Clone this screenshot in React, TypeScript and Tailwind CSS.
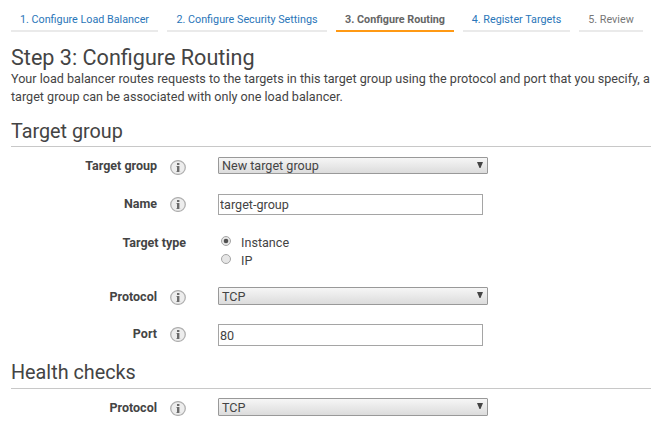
import type { ReactNode } from "react";

const steps = [
  { label: "1. Configure Load Balancer", width: "w-[147px]", style: "border-[#eaeaea] text-[#2a76b9]" },
  { label: "2. Configure Security Settings", width: "w-[160px]", style: "border-[#eaeaea] text-[#2a76b9]" },
  { label: "3. Configure Routing", width: "w-[118px]", style: "border-[#ff9914] font-bold text-[#666]" },
  { label: "4. Register Targets", width: "w-[107px]", style: "border-[#eaeaea] text-[#2a76b9]" },
  { label: "5. Review", width: "w-[64px]", style: "border-[#eaeaea] text-[#777]" },
];

function InfoIcon() {
  return (
    <svg className="mt-[3px] ml-[13px] h-[15px] w-4 shrink-0" viewBox="0 0 16 15">
      <ellipse cx="8" cy="7.5" rx="7.3" ry="6.9" fill="#ededed" stroke="#b0b0b0" strokeWidth="1.3" />
      <path d="M7 3h2.4v2H7zM7 6h2.4v6H7z" fill="#6a6a6a" />
      <path d="M6 6h1v1H6zM6 11h1v1H6zM9.4 11h.8v1h-.8z" fill="#b5b5b5" />
    </svg>
  );
}

function Row({ label, height, labelTop = "mt-px", info = true, children }: {
  label: string;
  height: string;
  labelTop?: string;
  info?: boolean;
  children: ReactNode;
}) {
  return (
    <div className={`flex items-start ${height}`}>
      <div className="flex w-[175px] items-start justify-end">
        <label className={`text-[12.5px] font-bold ${labelTop}`}>{label}</label>
        {info && <InfoIcon />}
      </div>
      <div className="ml-8">{children}</div>
    </div>
  );
}

function Select({ value, height = "h-[18px]", leading = "leading-[18px]" }: { value: string; height?: string; leading?: string }) {
  return (
    <div className={`flex w-[270px] items-start justify-between rounded-[1px] border border-[#999] bg-linear-to-b from-[#f6f6f6] to-[#dcdcdc] pr-1 pl-[3px] ${height}`}>
      <span className={leading}>{value}</span>
      <svg className="mt-1 h-[6px] w-[6px]" viewBox="0 0 6 6">
        <path d="M0 0h6L3.5 6h-1z" fill="#444" />
      </svg>
    </div>
  );
}

function Input({ value, size }: { value: string; size: string }) {
  return (
    <input
      defaultValue={value}
      className={`block w-[265px] border border-[#a5a5a5] bg-white px-px outline-none ${size}`}
    />
  );
}

function Radio({ label, checked = false }: { label: string; checked?: boolean }) {
  return (
    <label className="flex h-[18px] items-start">
      <svg className="mt-[2px] ml-[3px] size-[10px]" viewBox="0 0 10 10">
        <circle cx="5" cy="5" r="4.5" fill="#e6e6e6" stroke="#a5a5a5" />
        {checked && <circle cx="5" cy="5" r="2.3" fill="#505050" />}
      </svg>
      <span className="ml-[10px]">{label}</span>
    </label>
  );
}

export default function App() {
  return (
    <main className="h-[432px] w-[651px] overflow-hidden bg-white pl-[11px] font-[Roboto,sans-serif] text-[12.6px] leading-[18px] text-[#444]">
      <nav className="flex h-8 items-end gap-[9px] text-[10.78px]">
        {steps.map((s) => (
          <a key={s.label} className={`h-[22px] border-b-2 pt-px text-center whitespace-nowrap ${s.width} ${s.style}`}>
            {s.label}
          </a>
        ))}
      </nav>
      <header className="pt-[13px]">
        <h1 className="h-[25px] text-[21.6px] leading-[26px]">Step 3: Configure Routing</h1>
        <p className="whitespace-nowrap">
          Your load balancer routes requests to the targets in this target group using the protocol and port that you specify, a
          <br />
          target group can be associated with only one load balancer.
        </p>
      </header>
      <section>
        <h2 className="mt-[13px] mb-[10px] h-7 border-b border-[#c8c8c8] text-[19.8px] leading-[26px]">Target group</h2>
        <Row label="Target group" height="h-[37px]" labelTop="mt-0">
          <Select value="New target group" height="h-[17px]" leading="leading-4" />
        </Row>
        <Row label="Name" height="h-10">
          <Input value="target-group" size="h-[21px]" />
        </Row>
        <Row label="Target type" height="h-[53px]" labelTop="mt-0" info={false}>
          <Radio label="Instance" checked />
          <Radio label="IP" />
        </Row>
        <Row label="Protocol" height="h-[37px]">
          <Select value="TCP" />
        </Row>
        <Row label="Port" height="h-[22px]">
          <Input value="80" size="h-[22px]" />
        </Row>
      </section>
      <section>
        <h2 className="mt-[14px] mb-[9px] h-[29px] border-b border-[#c8c8c8] text-[19.8px] leading-[26px]">Health checks</h2>
        <Row label="Protocol" height="h-[18px]">
          <Select value="TCP" />
        </Row>
      </section>
    </main>
  );
}
